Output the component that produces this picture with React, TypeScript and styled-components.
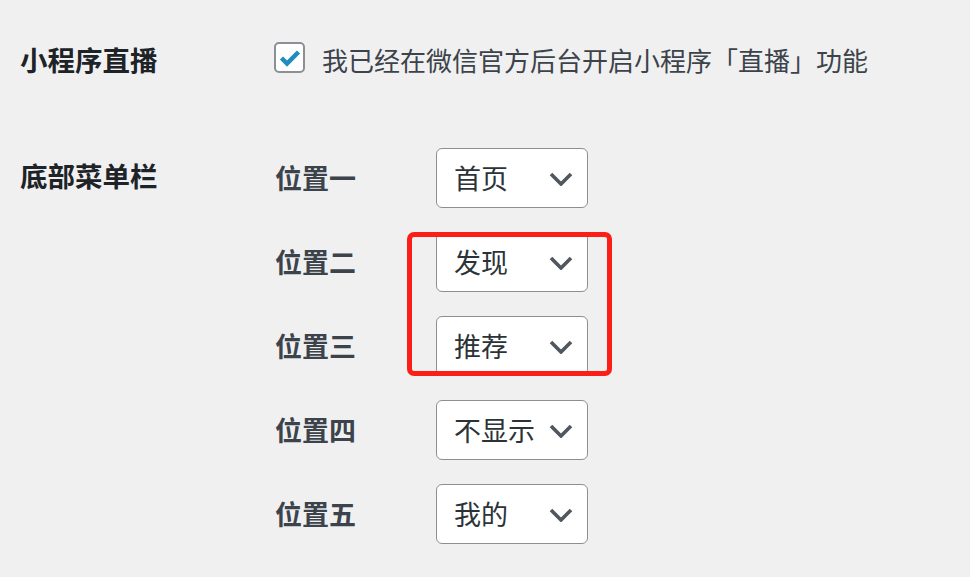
import React from "react";
import styled, { createGlobalStyle } from "styled-components";

const GlobalStyle = createGlobalStyle`
  html, body {
    margin: 0;
    padding: 0;
    background: #f0f0f1;
  }
  body {
    font-family: "Noto Sans CJK SC", "Noto Sans", "Liberation Sans", sans-serif;
    color: #3c434a;
    width: 970px;
    height: 577px;
    overflow: hidden;
  }
`;

const Form = styled.div`
  display: grid;
  grid-template-columns: 254px 1fr;
  align-items: start;
  padding: 42px 0 0 20px;
  row-gap: 71px;
`;

const RowHead = styled.div<{ $top: number }>`
  font-size: 27.5px;
  font-weight: 700;
  line-height: 36px;
  color: #1d2327;
  margin-top: ${(p) => p.$top}px;
  white-space: nowrap;
`;

const CheckLine = styled.label`
  display: flex;
  align-items: center;
  gap: 17px;
  height: 31px;
  font-size: 26px;
  color: #3c434a;
  white-space: nowrap;
`;

const CheckBox = styled.span`
  box-sizing: border-box;
  width: 31px;
  height: 31px;
  border: 2px solid #8c8f94;
  border-radius: 5px;
  background: #fff;
  display: flex;
  align-items: center;
  justify-content: center;
  flex: none;
`;

const CheckText = styled.span`
  line-height: 31px;
  transform: translateY(2px);
`;

const MenuList = styled.div`
  position: relative;
  display: flex;
  flex-direction: column;
  gap: 24px;
`;

const MenuRow = styled.div`
  display: flex;
  align-items: center;
  height: 60px;
`;

const MenuLabel = styled.span`
  width: 161px;
  padding-left: 1px;
  font-size: 27px;
  font-weight: 700;
  color: #3c434a;
  line-height: 36px;
  white-space: nowrap;
`;

const SelectWrap = styled.div`
  position: relative;
  width: 152px;
  height: 60px;
`;

const Select = styled.select`
  appearance: none;
  -webkit-appearance: none;
  box-sizing: border-box;
  width: 152px;
  height: 60px;
  margin: 0;
  padding: 0 40px 0 17px;
  border: 1.5px solid #8c8f94;
  border-radius: 6px;
  background: #fff;
  color: #2c3338;
  font-family: "Noto Sans CJK SC", "Noto Sans", sans-serif;
  font-size: 27px;
  line-height: 58px;
  outline: none;
`;

const Chevron = styled.svg`
  position: absolute;
  right: 15px;
  top: 24px;
  pointer-events: none;
`;

const Highlight = styled.div`
  position: absolute;
  left: 133px;
  top: 84px;
  width: 205px;
  height: 144px;
  box-sizing: border-box;
  border: 5px solid #fc1f17;
  border-radius: 7px;
  pointer-events: none;
`;

const menu = [
  { label: "位置一", value: "首页" },
  { label: "位置二", value: "发现" },
  { label: "位置三", value: "推荐" },
  { label: "位置四", value: "不显示" },
  { label: "位置五", value: "我的" },
];

const options = ["首页", "发现", "推荐", "不显示", "我的"];

export default function App() {
  return (
    <>
      <GlobalStyle />
      <Form>
        <RowHead $top={-1}>小程序直播</RowHead>
        <CheckLine>
          <CheckBox>
            <svg width="22" height="18" viewBox="0 0 22 18">
              <path
                d="M2.5 9 L8 14.5 L19.5 3"
                fill="none"
                stroke="#1e8cbe"
                strokeWidth="4.5"
                strokeLinecap="butt"
                strokeLinejoin="miter"
              />
            </svg>
          </CheckBox>
          <CheckText>我已经在微信官方后台开启小程序「直播」功能</CheckText>
        </CheckLine>

        <RowHead $top={9}>底部菜单栏</RowHead>
        <MenuList>
          {menu.map((m) => (
            <MenuRow key={m.label}>
              <MenuLabel>{m.label}</MenuLabel>
              <SelectWrap>
                <Select defaultValue={m.value}>
                  {options.map((o) => (
                    <option key={o} value={o}>
                      {o}
                    </option>
                  ))}
                </Select>
                <Chevron width="24" height="14" viewBox="0 0 24 14">
                  <path
                    d="M2 2 L12 12 L22 2"
                    fill="none"
                    stroke="#50575e"
                    strokeWidth="3.6"
                  />
                </Chevron>
              </SelectWrap>
            </MenuRow>
          ))}
          <Highlight />
        </MenuList>
      </Form>
    </>
  );
}
